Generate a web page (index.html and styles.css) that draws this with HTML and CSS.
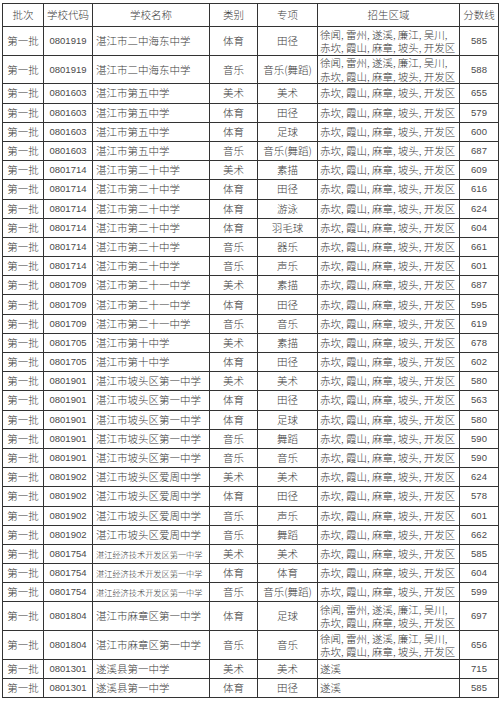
FILE: index.html
```html
<!DOCTYPE html>
<html lang="zh">
<head>
<meta charset="utf-8">
<link rel="stylesheet" href="styles.css">
</head>
<body>
<table class="score-table">
  <colgroup>
    <col class="c-batch"><col class="c-code"><col class="c-name"><col class="c-type"><col class="c-spec"><col class="c-area"><col class="c-score">
  </colgroup>
  <thead>
    <tr class="head"><th>批次</th><th>学校代码</th><th>学校名称</th><th>类别</th><th>专项</th><th>招生区域</th><th>分数线</th></tr>
  </thead>
  <tbody id="rows">
    <tr class="dbl"><td>第一批</td><td class="num">0801919</td><td class="name">湛江市二中海东中学</td><td>体育</td><td>田径</td><td class="area"><div class="ln">徐闻, 雷州, 遂溪, 廉江, 吴川,</div><div class="ln">赤坎, 霞山, 麻章, 坡头, 开发区</div></td><td class="num">585</td></tr>
    <tr class="dbl"><td>第一批</td><td class="num">0801919</td><td class="name">湛江市二中海东中学</td><td>音乐</td><td>音乐(舞蹈)</td><td class="area"><div class="ln">徐闻, 雷州, 遂溪, 廉江, 吴川,</div><div class="ln">赤坎, 霞山, 麻章, 坡头, 开发区</div></td><td class="num">588</td></tr>
    <tr><td>第一批</td><td class="num">0801603</td><td class="name">湛江市第五中学</td><td>美术</td><td>美术</td><td class="area">赤坎, 霞山, 麻章, 坡头, 开发区</td><td class="num">655</td></tr>
    <tr><td>第一批</td><td class="num">0801603</td><td class="name">湛江市第五中学</td><td>体育</td><td>田径</td><td class="area">赤坎, 霞山, 麻章, 坡头, 开发区</td><td class="num">579</td></tr>
    <tr><td>第一批</td><td class="num">0801603</td><td class="name">湛江市第五中学</td><td>体育</td><td>足球</td><td class="area">赤坎, 霞山, 麻章, 坡头, 开发区</td><td class="num">600</td></tr>
    <tr><td>第一批</td><td class="num">0801603</td><td class="name">湛江市第五中学</td><td>音乐</td><td>音乐(舞蹈)</td><td class="area">赤坎, 霞山, 麻章, 坡头, 开发区</td><td class="num">687</td></tr>
    <tr><td>第一批</td><td class="num">0801714</td><td class="name">湛江市第二十中学</td><td>美术</td><td>素描</td><td class="area">赤坎, 霞山, 麻章, 坡头, 开发区</td><td class="num">609</td></tr>
    <tr><td>第一批</td><td class="num">0801714</td><td class="name">湛江市第二十中学</td><td>体育</td><td>田径</td><td class="area">赤坎, 霞山, 麻章, 坡头, 开发区</td><td class="num">616</td></tr>
    <tr><td>第一批</td><td class="num">0801714</td><td class="name">湛江市第二十中学</td><td>体育</td><td>游泳</td><td class="area">赤坎, 霞山, 麻章, 坡头, 开发区</td><td class="num">624</td></tr>
    <tr><td>第一批</td><td class="num">0801714</td><td class="name">湛江市第二十中学</td><td>体育</td><td>羽毛球</td><td class="area">赤坎, 霞山, 麻章, 坡头, 开发区</td><td class="num">604</td></tr>
    <tr><td>第一批</td><td class="num">0801714</td><td class="name">湛江市第二十中学</td><td>音乐</td><td>器乐</td><td class="area">赤坎, 霞山, 麻章, 坡头, 开发区</td><td class="num">661</td></tr>
    <tr><td>第一批</td><td class="num">0801714</td><td class="name">湛江市第二十中学</td><td>音乐</td><td>声乐</td><td class="area">赤坎, 霞山, 麻章, 坡头, 开发区</td><td class="num">601</td></tr>
    <tr><td>第一批</td><td class="num">0801709</td><td class="name">湛江市第二十一中学</td><td>美术</td><td>素描</td><td class="area">赤坎, 霞山, 麻章, 坡头, 开发区</td><td class="num">687</td></tr>
    <tr><td>第一批</td><td class="num">0801709</td><td class="name">湛江市第二十一中学</td><td>体育</td><td>田径</td><td class="area">赤坎, 霞山, 麻章, 坡头, 开发区</td><td class="num">595</td></tr>
    <tr><td>第一批</td><td class="num">0801709</td><td class="name">湛江市第二十一中学</td><td>音乐</td><td>音乐</td><td class="area">赤坎, 霞山, 麻章, 坡头, 开发区</td><td class="num">619</td></tr>
    <tr><td>第一批</td><td class="num">0801705</td><td class="name">湛江市第十中学</td><td>美术</td><td>素描</td><td class="area">赤坎, 霞山, 麻章, 坡头, 开发区</td><td class="num">678</td></tr>
    <tr><td>第一批</td><td class="num">0801705</td><td class="name">湛江市第十中学</td><td>体育</td><td>田径</td><td class="area">赤坎, 霞山, 麻章, 坡头, 开发区</td><td class="num">602</td></tr>
    <tr><td>第一批</td><td class="num">0801901</td><td class="name">湛江市坡头区第一中学</td><td>美术</td><td>美术</td><td class="area">赤坎, 霞山, 麻章, 坡头, 开发区</td><td class="num">580</td></tr>
    <tr><td>第一批</td><td class="num">0801901</td><td class="name">湛江市坡头区第一中学</td><td>体育</td><td>田径</td><td class="area">赤坎, 霞山, 麻章, 坡头, 开发区</td><td class="num">563</td></tr>
    <tr><td>第一批</td><td class="num">0801901</td><td class="name">湛江市坡头区第一中学</td><td>体育</td><td>足球</td><td class="area">赤坎, 霞山, 麻章, 坡头, 开发区</td><td class="num">580</td></tr>
    <tr><td>第一批</td><td class="num">0801901</td><td class="name">湛江市坡头区第一中学</td><td>音乐</td><td>舞蹈</td><td class="area">赤坎, 霞山, 麻章, 坡头, 开发区</td><td class="num">590</td></tr>
    <tr><td>第一批</td><td class="num">0801901</td><td class="name">湛江市坡头区第一中学</td><td>音乐</td><td>音乐</td><td class="area">赤坎, 霞山, 麻章, 坡头, 开发区</td><td class="num">590</td></tr>
    <tr><td>第一批</td><td class="num">0801902</td><td class="name">湛江市坡头区爱周中学</td><td>美术</td><td>美术</td><td class="area">赤坎, 霞山, 麻章, 坡头, 开发区</td><td class="num">624</td></tr>
    <tr><td>第一批</td><td class="num">0801902</td><td class="name">湛江市坡头区爱周中学</td><td>体育</td><td>田径</td><td class="area">赤坎, 霞山, 麻章, 坡头, 开发区</td><td class="num">578</td></tr>
    <tr><td>第一批</td><td class="num">0801902</td><td class="name">湛江市坡头区爱周中学</td><td>音乐</td><td>声乐</td><td class="area">赤坎, 霞山, 麻章, 坡头, 开发区</td><td class="num">601</td></tr>
    <tr><td>第一批</td><td class="num">0801902</td><td class="name">湛江市坡头区爱周中学</td><td>音乐</td><td>舞蹈</td><td class="area">赤坎, 霞山, 麻章, 坡头, 开发区</td><td class="num">662</td></tr>
    <tr><td>第一批</td><td class="num">0801754</td><td class="name small">湛江经济技术开发区第一中学</td><td>美术</td><td>美术</td><td class="area">赤坎, 霞山, 麻章, 坡头, 开发区</td><td class="num">585</td></tr>
    <tr><td>第一批</td><td class="num">0801754</td><td class="name small">湛江经济技术开发区第一中学</td><td>体育</td><td>体育</td><td class="area">赤坎, 霞山, 麻章, 坡头, 开发区</td><td class="num">604</td></tr>
    <tr><td>第一批</td><td class="num">0801754</td><td class="name small">湛江经济技术开发区第一中学</td><td>音乐</td><td>音乐(舞蹈)</td><td class="area">赤坎, 霞山, 麻章, 坡头, 开发区</td><td class="num">599</td></tr>
    <tr class="dbl"><td>第一批</td><td class="num">0801804</td><td class="name">湛江市麻章区第一中学</td><td>体育</td><td>足球</td><td class="area"><div class="ln">徐闻, 雷州, 遂溪, 廉江, 吴川,</div><div class="ln">赤坎, 霞山, 麻章, 坡头, 开发区</div></td><td class="num">697</td></tr>
    <tr class="dbl"><td>第一批</td><td class="num">0801804</td><td class="name">湛江市麻章区第一中学</td><td>音乐</td><td>音乐</td><td class="area"><div class="ln">徐闻, 雷州, 遂溪, 廉江, 吴川,</div><div class="ln">赤坎, 霞山, 麻章, 坡头, 开发区</div></td><td class="num">656</td></tr>
    <tr><td>第一批</td><td class="num">0801301</td><td class="name">遂溪县第一中学</td><td>美术</td><td>美术</td><td class="area">遂溪</td><td class="num">715</td></tr>
    <tr><td>第一批</td><td class="num">0801301</td><td class="name">遂溪县第一中学</td><td>体育</td><td>田径</td><td class="area">遂溪</td><td class="num">585</td></tr>
  </tbody>
</table>
</body>
</html>
```

FILE: styles.css
```css
html, body {
  margin: 0;
  padding: 0;
  background: #ffffff;
}

body {
  padding: 3px 0 0 2px;
  font-family: "Noto Sans CJK SC", "Noto Sans", sans-serif;
  color: #3c3c3c;
}

.score-table {
  border-collapse: collapse;
  table-layout: fixed;
  width: 496px;
  font-size: 10.5px;
  line-height: 14px;
  font-weight: 300;
}

.c-batch { width: 41px; }
.c-code { width: 49px; }
.c-name { width: 117px; }
.c-type { width: 48px; }
.c-spec { width: 60px; }
.c-area { width: 142px; }
.c-score { width: 39px; }

.score-table th,
.score-table td {
  border: 1px solid #333333;
  padding: 0;
  text-align: center;
  vertical-align: middle;
  white-space: nowrap;
  overflow: hidden;
  font-weight: 300;
}

.head th {
  height: 22px;
}

.score-table tbody tr {
  height: 19.2px;
}

.score-table tbody tr.dbl {
  height: 28.7px;
}

.score-table td.name {
  text-align: left;
  padding-left: 3px;
}

.score-table td.name.small {
  font-size: 8.2px;
  padding-left: 3px;
}

.score-table td.area {
  text-align: left;
  padding-left: 2px;
}

.score-table td.area .ln {
  height: 13.3px;
  line-height: 13.3px;
  overflow: visible;
}

.score-table td.num {
  font-family: "Liberation Sans", "DejaVu Sans", sans-serif;
  font-size: 9.5px;
  color: #4a4a4a;
  font-weight: normal;
}
```
